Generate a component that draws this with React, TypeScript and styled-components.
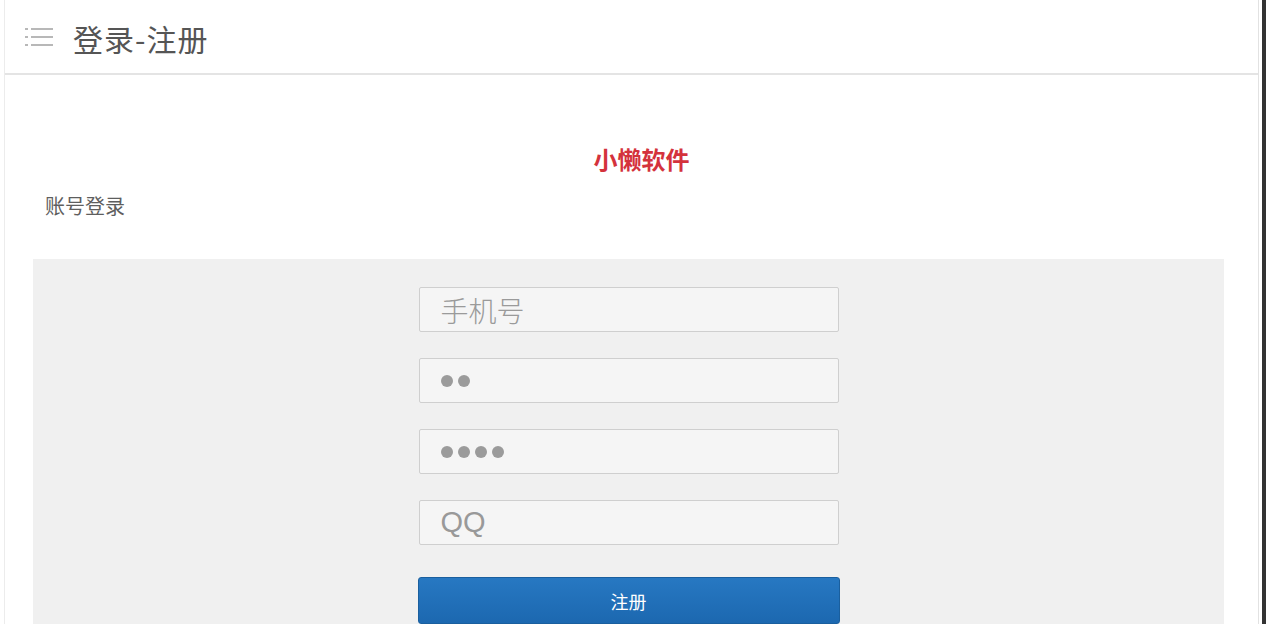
import styled, { createGlobalStyle } from 'styled-components';

const GlobalStyle = createGlobalStyle`
  html, body {
    margin: 0;
    padding: 0;
    background: #ffffff;
  }
  body {
    font-family: "Noto Sans CJK SC", "Liberation Sans", sans-serif;
  }
`

const Shell = styled.div`
  width: 1266px;
  height: 624px;
  overflow: hidden;
  box-sizing: border-box;
  padding-left: 4px;
  padding-right: 3px;
  border-right: 4px solid #333333;
  background: #ffffff;
`

const Frame = styled.div`
  height: 100%;
  box-sizing: border-box;
  border-left: 1px solid #ececec;
  border-right: 1px solid #e2e2e2;
  display: flex;
  flex-direction: column;
`

const Header = styled.div`
  height: 73px;
  flex-shrink: 0;
  display: flex;
  align-items: center;
  gap: 18px;
  padding-left: 18px;
  border-bottom: 2px solid #e4e4e4;
`

const HeaderTitle = styled.h1`
  margin: 0;
  font-size: 30px;
  font-weight: 400;
  letter-spacing: 1px;
  color: #555555;
  line-height: 1;
  padding-top: 2px;
`

const Body = styled.div`
  flex: 1;
  display: flex;
  flex-direction: column;
  padding: 66px 34px 0 28px;
`

const Brand = styled.div`
  text-align: center;
  padding-left: 26px;
  font-size: 24px;
  font-weight: 700;
  color: #d4323c;
  line-height: 36px;
`

const SectionLabel = styled.div`
  margin-top: 14px;
  padding-left: 12px;
  font-size: 20px;
  color: #5e5e5e;
  line-height: 30px;
`

const FormPanel = styled.div`
  flex: 1;
  margin-top: 38px;
  background: #f0f0f0;
  display: flex;
  flex-direction: column;
  align-items: center;
  padding-top: 28px;
  gap: 26px;
`

const Field = styled.div`
  width: 420px;
  height: 45px;
  box-sizing: border-box;
  border: 1px solid #cfcfcf;
  border-radius: 2px;
  background: #f5f5f5;
  display: flex;
  align-items: center;
  padding-left: 21px;
  font-size: 28px;
  color: #9a9a9a;
  font-weight: 300;
`

const LatinText = styled.span`
  font-family: "Liberation Sans", sans-serif;
  font-size: 29px;
  color: #999999;
`

const Dots = styled.div`
  display: flex;
  gap: 5px;
`

const Dot = styled.span`
  width: 12px;
  height: 12px;
  border-radius: 50%;
  background: #9b9b9b;
`

const SubmitButton = styled.button`
  width: 422px;
  height: 47px;
  margin-top: 6px;
  flex-shrink: 0;
  border: 1px solid #1a5f9e;
  border-radius: 3px;
  background: linear-gradient(#2778c2, #1c68b0);
  color: #ffffff;
  font-family: inherit;
  font-size: 18px;
  cursor: pointer;
`

const MenuIcon = () => (
  <svg width="32" height="26" viewBox="0 0 32 26">
    {[5, 13, 21].map((y) => (
      <g key={y} fill="#b8b8b8">
        <rect x="2" y={y - 1} width="3" height="2" />
        <rect x="8" y={y - 1} width="22" height="2" />
      </g>
    ))}
  </svg>
)

const PasswordDots = ({ count }: { count: number }) => (
  <Dots>
    {Array.from({ length: count }).map((_, i) => <Dot key={i} />)}
  </Dots>
)

export default function App() {
  return (
    <>
      <GlobalStyle />
      <Shell>
        <Frame>
          <Header>
            <MenuIcon />
            <HeaderTitle>登录-注册</HeaderTitle>
          </Header>
          <Body>
            <Brand>小懒软件</Brand>
            <SectionLabel>账号登录</SectionLabel>
            <FormPanel>
              <Field>手机号</Field>
              <Field><PasswordDots count={2} /></Field>
              <Field><PasswordDots count={4} /></Field>
              <Field><LatinText>QQ</LatinText></Field>
              <SubmitButton>注册</SubmitButton>
            </FormPanel>
          </Body>
        </Frame>
      </Shell>
    </>
  )
}
